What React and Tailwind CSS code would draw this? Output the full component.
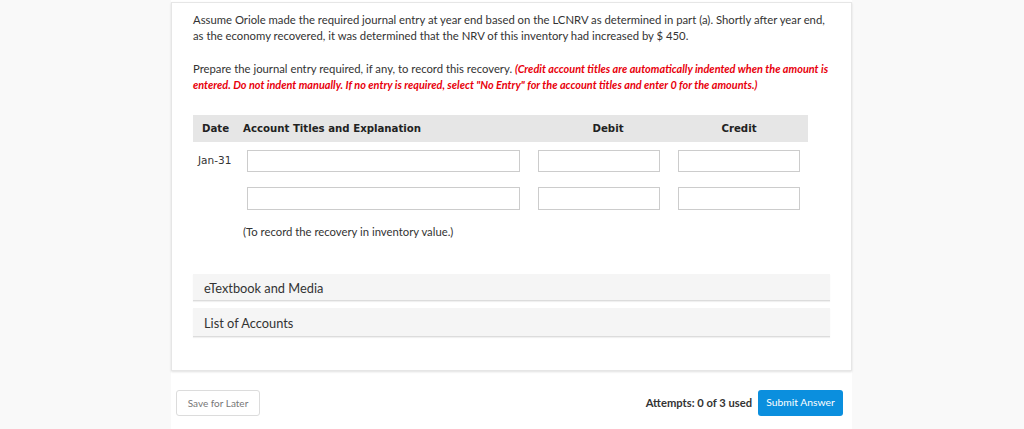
export default function App() {
  const lato = { fontFamily: "Lato, 'Open Sans', sans-serif" };
  const deja = { fontFamily: "'DejaVu Sans', Verdana, sans-serif" };

  return (
    <div className="min-h-screen bg-[#f9f9f9]" style={lato}>
      <div className="ml-[171px] w-[681px] bg-white pt-[2px]">
        {/* Question card */}
        <div className="border border-[#e6e6e6] shadow-[0_1px_2px_rgba(0,0,0,0.12)] px-[21px] pt-[9px] pb-[33px]">
          <p className="text-[11.3px] leading-[16px] text-[#333]">
            Assume Oriole made the required journal entry at year end based on the LCNRV as determined in part (a). Shortly after year end,
            as the economy recovered, it was determined that the NRV of this inventory had increased by $ 450.
          </p>
          <p className="mt-[17px] text-[11.3px] leading-[16px] text-[#333]">
            Prepare the journal entry required, if any, to record this recovery.{" "}
            <span className="text-[10.9px] font-bold italic text-[#e8000b]">
              (Credit account titles are automatically indented when the amount is entered. Do not indent manually. If no entry is required, select "No Entry" for the account titles and enter 0 for the amounts.)
            </span>
          </p>

          {/* Journal table */}
          <div className="mt-[22px] w-[615px]" style={deja}>
            <div className="flex items-center h-[27px] bg-[#e6e6e6] text-[10.2px] font-bold text-[#222]">
              <div className="w-[50px] pl-[9px]">Date</div>
              <div className="w-[295px]">Account Titles and Explanation</div>
              <div className="w-[140px] text-center">Debit</div>
              <div className="w-[122px] text-center">Credit</div>
            </div>

            <div className="flex items-center mt-[8px]">
              <div className="w-[54px] pl-[5px] text-[10.5px] text-[#333]">Jan-31</div>
              <input className="w-[273px] h-[22px] border border-[#ccc] bg-white" />
              <input className="ml-[18px] w-[122px] h-[22px] border border-[#ccc] bg-white" />
              <input className="ml-[18px] w-[122px] h-[22px] border border-[#ccc] bg-white" />
            </div>
            <div className="flex items-center mt-[15px]">
              <div className="w-[54px]" />
              <input className="w-[273px] h-[23px] border border-[#ccc] bg-white" />
              <input className="ml-[18px] w-[122px] h-[23px] border border-[#ccc] bg-white" />
              <input className="ml-[18px] w-[122px] h-[23px] border border-[#ccc] bg-white" />
            </div>
            <p className="mt-[14px] ml-[50px] text-[11.3px] leading-[16px] text-[#333]" style={lato}>
              (To record the recovery in inventory value.)
            </p>
          </div>

          {/* Accordions */}
          <div className="mt-[34px] space-y-[7px]">
            <div className="h-[27px] flex items-center pl-[11px] pt-[3px] bg-[#f5f5f5] border-b border-[#dcdcdc] shadow-[0_1px_1px_rgba(0,0,0,0.06)] text-[12.8px] text-[#333]">
              eTextbook and Media
            </div>
            <div className="h-[29px] flex items-center pl-[11px] pt-[3px] bg-[#f5f5f5] border-b border-[#dcdcdc] shadow-[0_1px_1px_rgba(0,0,0,0.06)] text-[12.8px] text-[#333]">
              List of Accounts
            </div>
          </div>
        </div>

        {/* Footer */}
        <div className="flex items-center justify-between pt-[19px] pb-[13px] pl-[5px] pr-[9px]">
          <button className="h-[26px] w-[84px] border border-[#dcdcdc] rounded-[3px] bg-white text-[10px] text-[#777]">
            Save for Later
          </button>
          <div className="flex items-center gap-[6px]">
            <span className="text-[11.2px] font-bold text-[#333]">Attempts: 0 of 3 used</span>
            <button className="h-[26px] w-[85px] rounded-[3px] bg-[#0b8fde] text-[10.3px] text-white">
              Submit Answer
            </button>
          </div>
        </div>
      </div>
    </div>
  );
}
